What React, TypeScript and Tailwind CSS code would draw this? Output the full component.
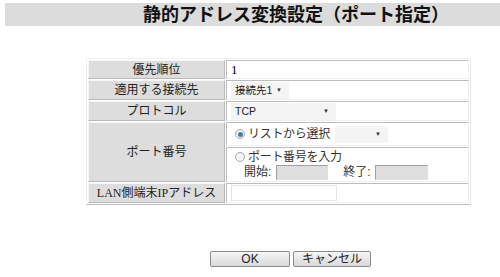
const font = { fontFamily: '"Liberation Serif", "Noto Sans CJK JP", serif' }
const gothic = '[font-family:"Liberation_Sans","Noto_Sans_CJK_JP",sans-serif]'

function Select({ label, width }: { label: string; width: string }) {
  return (
    <div
      className={`flex h-[17px] items-center justify-between whitespace-nowrap bg-[#f4f4f4] pl-1 pr-[7px] text-[10.5px] leading-none text-[#222] ${gothic} ${width}`}
    >
      <span>{label}</span>
      <span className="text-[6px] leading-none text-[#333]">▼</span>
    </div>
  )
}

function Radio({ checked }: { checked?: boolean }) {
  return (
    <span className="flex h-[10px] w-[10px] shrink-0 items-center justify-center rounded-full border border-[#a8a8a8] bg-[#f4f4f4]">
      {checked && <span className="h-[5px] w-[5px] rounded-full bg-[#4a78ad]" />}
    </span>
  )
}

function Label({
  children,
  className = '',
  rowSpan,
}: {
  children: React.ReactNode
  className?: string
  rowSpan?: number
}) {
  return (
    <td
      rowSpan={rowSpan}
      className={`w-[137px] whitespace-nowrap border-t border-l border-t-[#f6f6f6] border-l-[#f6f6f6] border-b border-r border-b-[#b9b9b9] border-r-[#b9b9b9] bg-[#dddddd] p-0 text-center text-[12px] leading-[14px] text-[#222] ${className}`}
    >
      {children}
    </td>
  )
}

function Value({ children, className = '' }: { children?: React.ReactNode; className?: string }) {
  return (
    <td
      className={`whitespace-nowrap border-t border-l border-t-[#bdbdbd] border-l-[#bdbdbd] border-b border-r border-b-[#f0f0f0] border-r-[#f0f0f0] bg-white p-0 pl-[4px] text-[12px] leading-[14px] ${className}`}
    >
      {children}
    </td>
  )
}

export default function App() {
  return (
    <div className="h-[277px] w-[500px] overflow-hidden bg-white" style={font}>
      {/* Title */}
      <div className="ml-[5px] mt-[3px] flex h-[23px] items-center bg-[#dcdcdc] pl-[138px]">
        <h1 className={`whitespace-nowrap text-[18px] font-bold leading-none text-[#111] ${gothic}`}>
          静的アドレス変換設定（ポート指定）
        </h1>
      </div>

      {/* Settings table */}
      <div className="ml-[86px] mt-[32px] w-[385px] border-b border-r border-b-[#bdbdbd] border-r-[#e8e8e8] border-t border-l border-t-[#f0f0f0] border-l-[#f0f0f0]">
        <table className="w-full border-separate border-spacing-[1px]">
          <tbody>
            <tr className="h-[19px]">
              <Label className={gothic}>優先順位</Label>
              <Value className="text-[13px]">1</Value>
            </tr>
            <tr className="h-[20px]">
              <Label className={gothic}>適用する接続先</Label>
              <Value>
                <Select label="接続先1" width="w-[58px]" />
              </Value>
            </tr>
            <tr className="h-[20px]">
              <Label className={gothic}>プロトコル</Label>
              <Value>
                <Select label="TCP" width="w-[105px]" />
              </Value>
            </tr>
            <tr className="h-[24px]">
              <Label className={gothic} rowSpan={2}>
                ポート番号
              </Label>
              <Value className="pl-[8px]">
                <div className={`flex items-center gap-[3px] text-[12px] text-[#333] ${gothic}`}>
                  <Radio checked />
                  <span className="w-[84px] tracking-[-0.3px]">リストから選択</span>
                  <Select label="" width="w-[53px]" />
                </div>
              </Value>
            </tr>
            <tr className="h-[35px]">
              <Value className="pl-[8px]">
                <div className={`flex flex-col text-[12px] leading-[15px] text-[#333] ${gothic}`}>
                  <div className="flex items-center gap-[3px]">
                    <Radio />
                    <span className="tracking-[-0.3px]">ポート番号を入力</span>
                  </div>
                  <div className="ml-[9px] flex items-center">
                    <span>開始:</span>
                    <span className="ml-[5px] h-[15px] w-[52px] border border-t-[#a0a0a0] border-l-[#a0a0a0] border-b-[#e0e0e0] border-r-[#e0e0e0] bg-[#dedede]" />
                    <span className="ml-[15px]">終了:</span>
                    <span className="ml-[4px] h-[15px] w-[53px] border border-t-[#a0a0a0] border-l-[#a0a0a0] border-b-[#e0e0e0] border-r-[#e0e0e0] bg-[#dedede]" />
                  </div>
                </div>
              </Value>
            </tr>
            <tr className="h-[20px]">
              <Label className="[font-family:'Liberation_Serif','Noto_Sans_CJK_JP',serif]">LAN側端末IPアドレス</Label>
              <Value>
                <div className="h-[16px] w-[106px] border border-[#e4e4e4] bg-white" />
              </Value>
            </tr>
          </tbody>
        </table>
      </div>

      {/* Buttons */}
      <div className={`ml-[210px] mt-[46px] flex gap-[3px] text-[12px] leading-none text-[#222] ${gothic}`}>
        <button className="flex h-[16px] w-[80px] items-center justify-center rounded-[2px] border border-[#8a8a8a] bg-gradient-to-b from-[#f6f6f6] to-[#d9d9d9]">
          OK
        </button>
        <button className="flex h-[16px] w-[78px] items-center justify-center rounded-[2px] border border-[#8a8a8a] bg-gradient-to-b from-[#f6f6f6] to-[#d9d9d9]">
          キャンセル
        </button>
      </div>
    </div>
  )
}
